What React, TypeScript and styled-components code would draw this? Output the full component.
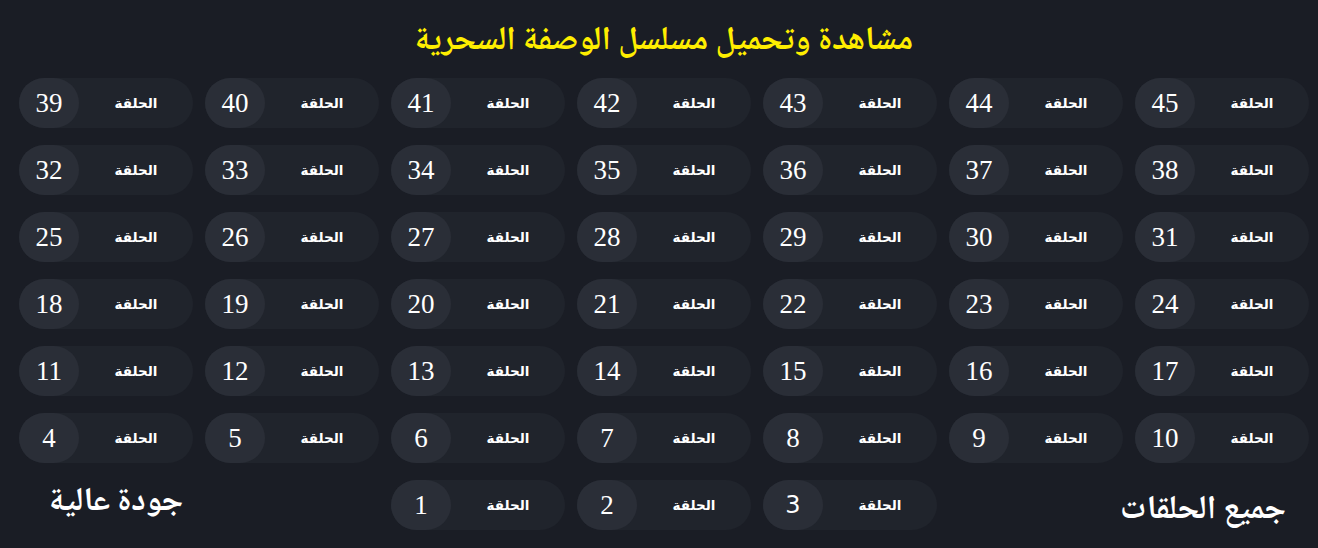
import React from "react";
import styled, { createGlobalStyle } from "styled-components";

const GlobalStyle = createGlobalStyle`
  html, body {
    margin: 0;
    padding: 0;
    background: #1a1d25;
  }
  body {
    font-family: "DejaVu Sans", "Noto Sans", sans-serif;
  }
`;

const Page = styled.div`
  direction: rtl;
  width: 1318px;
  height: 548px;
  box-sizing: border-box;
  padding: 20px 9px 0 19px;
  background: #1a1d25;
  overflow: hidden;
`;

const Title = styled.h1`
  margin: 0 0 14px;
  height: 44px;
  line-height: 44px;
  text-align: center;
  color: #ffee00;
  font-family: "Noto Naskh Arabic", "Noto Sans Arabic", "DejaVu Sans", sans-serif;
  font-size: 33px;
  font-weight: 700;
`;

const Grid = styled.div`
  display: grid;
  grid-template-columns: repeat(7, 174px);
  grid-auto-rows: 50px;
  column-gap: 12px;
  row-gap: 17px;
`;

const Pill = styled.a`
  display: flex;
  align-items: center;
  height: 50px;
  border-radius: 25px;
  background: #20242c;
  text-decoration: none;
  cursor: pointer;
  overflow: hidden;
`;

const Label = styled.span`
  flex: 1;
  text-align: center;
  color: #ffffff;
  font-family: "DejaVu Sans", sans-serif;
  font-size: 13.5px;
  font-weight: 700;
`;

const Num = styled.span<{ $sans?: boolean }>`
  display: flex;
  align-items: center;
  justify-content: center;
  width: 60px;
  height: 100%;
  background: #2a2e37;
  border-radius: 18px 25px 25px 18px;
  color: #ffffff;
  font-family: ${(p) =>
    p.$sans ? '"DejaVu Sans", sans-serif' : '"Liberation Serif", serif'};
  font-size: ${(p) => (p.$sans ? "24px" : "27px")};
  direction: ltr;
`;

const Heading = styled.h2<{ $side: "start" | "end"; $shift: number }>`
  grid-column: span 2;
  margin: 0;
  align-self: center;
  justify-self: ${(p) => p.$side};
  padding-inline-start: ${(p) => (p.$side === "start" ? "23px" : "0")};
  padding-inline-end: ${(p) => (p.$side === "end" ? "30px" : "0")};
  transform: translateY(${(p) => p.$shift}px);
  color: #ffffff;
  font-family: "Noto Naskh Arabic", "Noto Sans Arabic", "DejaVu Sans", sans-serif;
  font-size: 33px;
  font-weight: 700;
  line-height: 1;
  white-space: nowrap;
`;

function Episode({ n }: { n: number }) {
  return (
    <Pill href={`#episode-${n}`}>
      <Label>الحلقة</Label>
      <Num $sans={n === 3}>{n}</Num>
    </Pill>
  );
}

export default function App() {
  const main: number[] = [];
  for (let n = 45; n >= 4; n--) main.push(n);

  return (
    <>
      <GlobalStyle />
      <Page>
        <Title>مشاهدة وتحميل مسلسل الوصفة السحرية</Title>
        <Grid>
          {main.map((n) => (
            <Episode key={n} n={n} />
          ))}
          <Heading $side="start" $shift={6}>
            جميع الحلقات
          </Heading>
          <Episode n={3} />
          <Episode n={2} />
          <Episode n={1} />
          <Heading $side="end" $shift={-2}>
            جودة عالية
          </Heading>
        </Grid>
      </Page>
    </>
  );
}
